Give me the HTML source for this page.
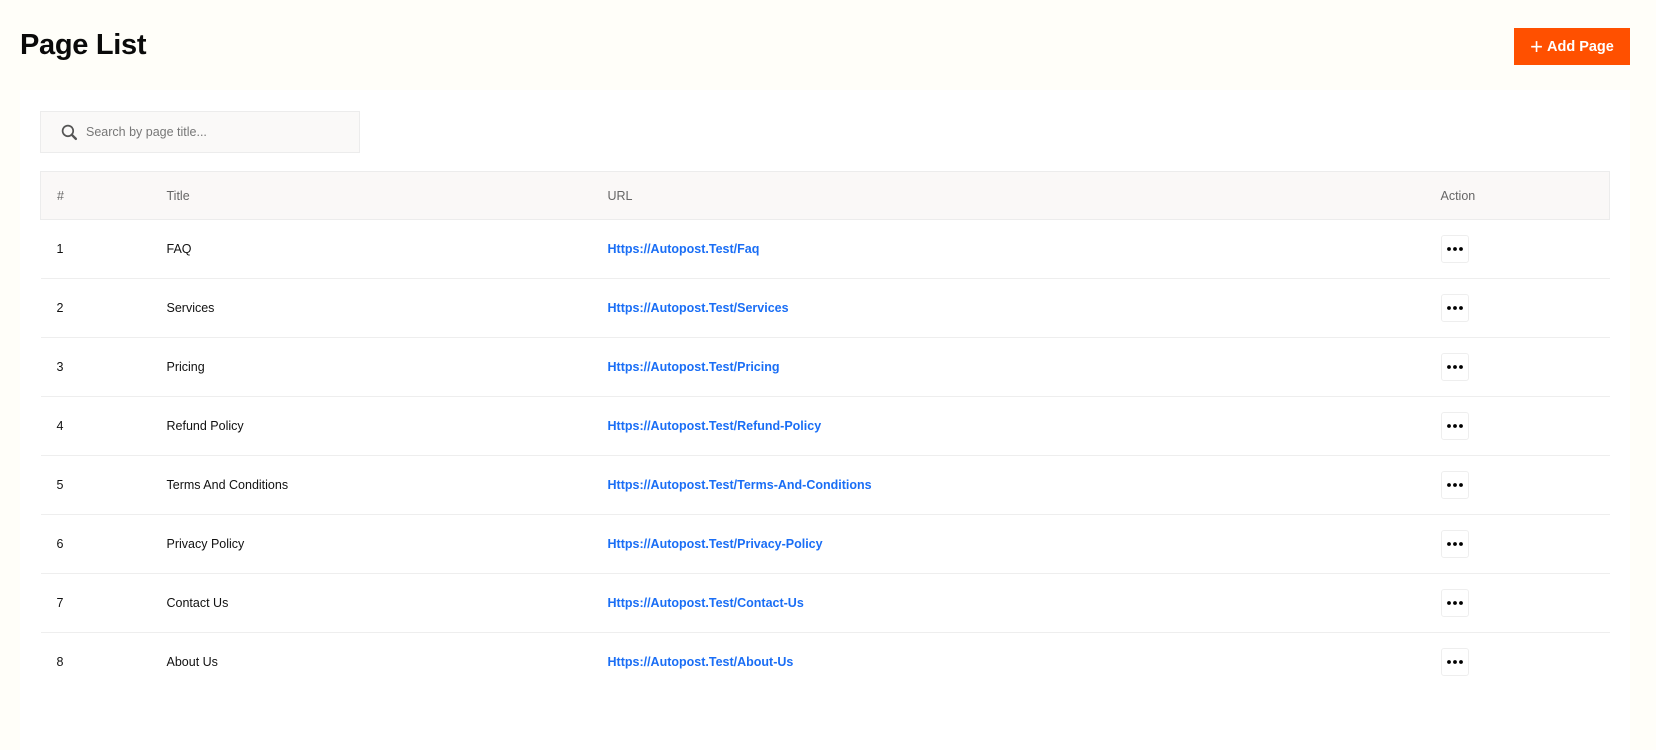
<!DOCTYPE html>
<html><head><style>
body{margin:0;width:1656px;height:739px;background:#fffef9;font-family:"Liberation Sans",sans-serif;position:relative;overflow:hidden}
h1{position:absolute;left:20px;top:28px;margin:0;font-size:29px;font-weight:bold;color:#0a0a0a;letter-spacing:-0.3px;line-height:34px}
.btn{position:absolute;left:1514px;top:28px;width:116px;height:37px;background:#ff5000;color:#fff;font-weight:bold;font-size:14.5px;display:flex;align-items:center;justify-content:center;gap:4px}
.card{position:absolute;left:20px;top:90px;width:1610px;height:660px;background:#fff}
.search{position:absolute;left:20px;top:21px;width:318px;height:40px;border:1px solid #ececec;background:#faf9f8;display:flex;align-items:center;font-size:12.5px;color:#777}
.search svg{margin-left:20px;margin-right:8px}
table{position:absolute;left:20px;top:81px;width:1570px;border-collapse:collapse;font-size:12.5px;table-layout:fixed}
th,td{padding:0}
th{background:#faf8f7;border-top:1px solid #ececec;border-bottom:1px solid #ececec;height:47px;font-weight:normal;color:#666;text-align:left}
th:first-child{border-left:1px solid #ececec}th:last-child{border-right:1px solid #ececec}
td{height:58px;border-bottom:1px solid #eeeeee;color:#111}
td a{color:#1a6ef5;text-decoration:none;font-weight:bold}
.c1{padding-left:16px;width:110px}
.dots{width:26px;height:26px;border:1px solid #eee;border-radius:3px;display:flex;align-items:center;justify-content:center}
</style></head><body>
<h1>Page List</h1>
<div class="btn"><span style="font-size:22px;font-weight:normal;line-height:20px">+</span>Add Page</div>
<div class="card">
<div class="search"><svg width="17" height="17" viewBox="0 0 16 16"><circle cx="6.5" cy="6.5" r="5" fill="none" stroke="#555" stroke-width="1.6"/><path d="M10.2 10.2L14 14" stroke="#555" stroke-width="2.2" stroke-linecap="round"/></svg>Search by page title...</div>
<table>
<colgroup><col style="width:126px"><col style="width:441px"><col style="width:833px"><col></colgroup>
<tr><th class="c1">#</th><th>Title</th><th>URL</th><th>Action</th></tr>
<tr><td class="c1">1</td><td>FAQ</td><td><a>Https://Autopost.Test/Faq</a></td><td><div class="dots"><svg width="16" height="4"><circle cx="2" cy="2" r="1.9"/><circle cx="8" cy="2" r="1.9"/><circle cx="14" cy="2" r="1.9"/></svg></div></td></tr>
<tr><td class="c1">2</td><td>Services</td><td><a>Https://Autopost.Test/Services</a></td><td><div class="dots"><svg width="16" height="4"><circle cx="2" cy="2" r="1.9"/><circle cx="8" cy="2" r="1.9"/><circle cx="14" cy="2" r="1.9"/></svg></div></td></tr>
<tr><td class="c1">3</td><td>Pricing</td><td><a>Https://Autopost.Test/Pricing</a></td><td><div class="dots"><svg width="16" height="4"><circle cx="2" cy="2" r="1.9"/><circle cx="8" cy="2" r="1.9"/><circle cx="14" cy="2" r="1.9"/></svg></div></td></tr>
<tr><td class="c1">4</td><td>Refund Policy</td><td><a>Https://Autopost.Test/Refund-Policy</a></td><td><div class="dots"><svg width="16" height="4"><circle cx="2" cy="2" r="1.9"/><circle cx="8" cy="2" r="1.9"/><circle cx="14" cy="2" r="1.9"/></svg></div></td></tr>
<tr><td class="c1">5</td><td>Terms And Conditions</td><td><a>Https://Autopost.Test/Terms-And-Conditions</a></td><td><div class="dots"><svg width="16" height="4"><circle cx="2" cy="2" r="1.9"/><circle cx="8" cy="2" r="1.9"/><circle cx="14" cy="2" r="1.9"/></svg></div></td></tr>
<tr><td class="c1">6</td><td>Privacy Policy</td><td><a>Https://Autopost.Test/Privacy-Policy</a></td><td><div class="dots"><svg width="16" height="4"><circle cx="2" cy="2" r="1.9"/><circle cx="8" cy="2" r="1.9"/><circle cx="14" cy="2" r="1.9"/></svg></div></td></tr>
<tr><td class="c1">7</td><td>Contact Us</td><td><a>Https://Autopost.Test/Contact-Us</a></td><td><div class="dots"><svg width="16" height="4"><circle cx="2" cy="2" r="1.9"/><circle cx="8" cy="2" r="1.9"/><circle cx="14" cy="2" r="1.9"/></svg></div></td></tr>
<tr><td class="c1" style="border:none">8</td><td style="border:none">About Us</td><td style="border:none"><a>Https://Autopost.Test/About-Us</a></td><td style="border:none"><div class="dots"><svg width="16" height="4"><circle cx="2" cy="2" r="1.9"/><circle cx="8" cy="2" r="1.9"/><circle cx="14" cy="2" r="1.9"/></svg></div></td></tr>
</table>
</div>
</body></html>
